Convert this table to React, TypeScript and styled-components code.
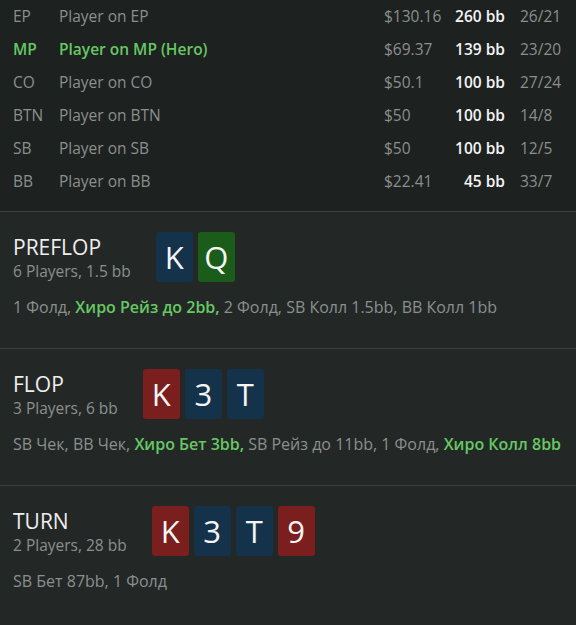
import React from 'react';
import styled, { createGlobalStyle } from 'styled-components';

const GlobalStyle = createGlobalStyle`
    html, body {
        margin: 0;
        padding: 0;
        background: #232827;
    }
    body {
        font-family: "Open Sans", "Noto Sans", sans-serif;
        color: #8c8f8e;
    }
`;

const GREEN = '#66c863';

const Page = styled.div`
    width: 576px;
    min-height: 625px;
    background: #232827;
    overflow: hidden;
`;

const PlayersTable = styled.div`
    background: #1d2120;
    padding: 0 0 14px 13px;
    margin-top: -1px;
    border-bottom: 1px solid #3b403e;
`;

const PlayerRow = styled.div<{ $hero?: boolean }>`
    display: grid;
    grid-template-columns: 46px 325px 60px 61px auto;
    height: 33px;
    align-items: center;
    font-size: 15.5px;
    color: ${(p) => (p.$hero ? GREEN : '#8c8f8e')};
    font-weight: ${(p) => (p.$hero ? 600 : 400)};
`;

const Money = styled.span`
    color: #8c8f8e;
    font-weight: 400;
`;

const Stack = styled.span`
    color: #f4f4f4;
    font-weight: 600;
    text-align: right;
`;

const Stats = styled.span`
    color: #8c8f8e;
    font-weight: 400;
    padding-left: 15px;
`;

const Street = styled.section`
    padding: 20px 13px 30px;
    border-bottom: 1px solid #3b403e;

    &:last-child {
        border-bottom: none;
    }
`;

const StreetHeader = styled.div`
    display: flex;
    align-items: flex-start;
    gap: 25px;
`;

const StreetInfo = styled.div`
    display: flex;
    flex-direction: column;
    padding-top: 1px;
`;

const StreetTitle = styled.div`
    font-size: 21px;
    line-height: 28px;
    color: #eeeeee;
`;

const StreetSub = styled.div`
    font-size: 15.5px;
    line-height: 21px;
    color: #8c8f8e;
`;

const Board = styled.div`
    display: flex;
    gap: 5px;
`;

const Card = styled.div<{ $suit: 'blue' | 'green' | 'red' }>`
    width: 37px;
    height: 50px;
    border-radius: 3px;
    display: flex;
    align-items: center;
    justify-content: center;
    font-size: 31px;
    color: #f5f5f5;
    background: ${(p) => (p.$suit === 'green' ? '#1b5c1a' : p.$suit === 'red' ? '#7a1e1e' : '#15324b')};
`;

const Actions = styled.div`
    margin-top: 15px;
    font-size: 16px;
    line-height: 21px;
    color: #8c8f8e;
    white-space: nowrap;
`;

const HeroAction = styled.span`
    color: ${GREEN};
    font-weight: 600;
`;

type Suit = 'blue' | 'green' | 'red';

const players = [
    { pos: 'EP', name: 'Player on EP', money: '$130.16', stack: '260 bb', stats: '26/21' },
    { pos: 'MP', name: 'Player on MP (Hero)', money: '$69.37', stack: '139 bb', stats: '23/20', hero: true },
    { pos: 'CO', name: 'Player on CO', money: '$50.1', stack: '100 bb', stats: '27/24' },
    { pos: 'BTN', name: 'Player on BTN', money: '$50', stack: '100 bb', stats: '14/8' },
    { pos: 'SB', name: 'Player on SB', money: '$50', stack: '100 bb', stats: '12/5' },
    { pos: 'BB', name: 'Player on BB', money: '$22.41', stack: '45 bb', stats: '33/7' },
];

const streets: {
    title: string;
    sub: string;
    cards: [string, Suit][];
    actions: { text: string; hero?: boolean }[];
}[] = [
    {
        title: 'PREFLOP',
        sub: '6 Players, 1.5 bb',
        cards: [
            ['K', 'blue'],
            ['Q', 'green'],
        ],
        actions: [
            { text: '1 Фолд' },
            { text: 'Хиро Рейз до 2bb', hero: true },
            { text: '2 Фолд' },
            { text: 'SB Колл 1.5bb' },
            { text: 'BB Колл 1bb' },
        ],
    },
    {
        title: 'FLOP',
        sub: '3 Players, 6 bb',
        cards: [
            ['K', 'red'],
            ['3', 'blue'],
            ['T', 'blue'],
        ],
        actions: [
            { text: 'SB Чек' },
            { text: 'BB Чек' },
            { text: 'Хиро Бет 3bb', hero: true },
            { text: 'SB Рейз до 11bb' },
            { text: '1 Фолд' },
            { text: 'Хиро Колл 8bb', hero: true },
        ],
    },
    {
        title: 'TURN',
        sub: '2 Players, 28 bb',
        cards: [
            ['K', 'red'],
            ['3', 'blue'],
            ['T', 'blue'],
            ['9', 'red'],
        ],
        actions: [{ text: 'SB Бет 87bb' }, { text: '1 Фолд' }],
    },
];

export default function App() {
    return (
        <Page>
            <GlobalStyle />
            <PlayersTable>
                {players.map((p) => (
                    <PlayerRow key={p.pos} $hero={p.hero}>
                        <span>{p.pos}</span>
                        <span>{p.name}</span>
                        <Money>{p.money}</Money>
                        <Stack>{p.stack}</Stack>
                        <Stats>{p.stats}</Stats>
                    </PlayerRow>
                ))}
            </PlayersTable>
            {streets.map((s) => (
                <Street key={s.title}>
                    <StreetHeader>
                        <StreetInfo>
                            <StreetTitle>{s.title}</StreetTitle>
                            <StreetSub>{s.sub}</StreetSub>
                        </StreetInfo>
                        <Board>
                            {s.cards.map(([rank, suit], i) => (
                                <Card key={i} $suit={suit}>
                                    {rank}
                                </Card>
                            ))}
                        </Board>
                    </StreetHeader>
                    <Actions>
                        {s.actions.map((a, i) => {
                            const last = i === s.actions.length - 1;
                            const text = a.text + (last ? '' : ',');
                            return (
                                <React.Fragment key={i}>
                                    {a.hero ? <HeroAction>{text}</HeroAction> : text}
                                    {last ? '' : ' '}
                                </React.Fragment>
                            );
                        })}
                    </Actions>
                </Street>
            ))}
        </Page>
    );
}
